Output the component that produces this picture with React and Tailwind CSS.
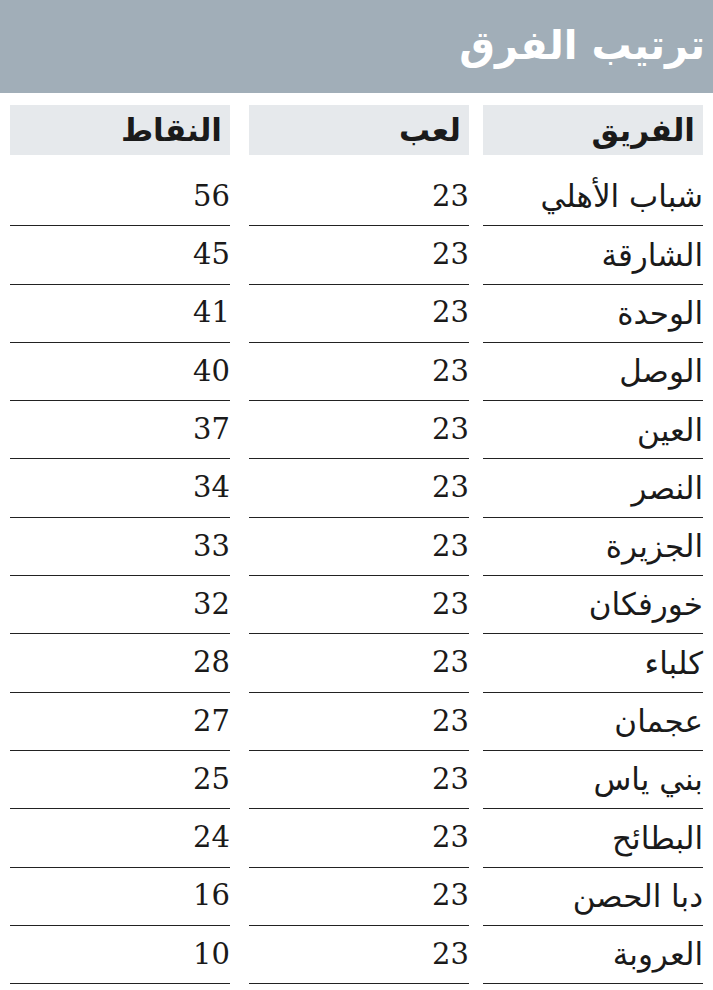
import React from "react";

const rows = [
  ["شباب الأهلي", 23, 56],
  ["الشارقة", 23, 45],
  ["الوحدة", 23, 41],
  ["الوصل", 23, 40],
  ["العين", 23, 37],
  ["النصر", 23, 34],
  ["الجزيرة", 23, 33],
  ["خورفكان", 23, 32],
  ["كلباء", 23, 28],
  ["عجمان", 23, 27],
  ["بني ياس", 23, 25],
  ["البطائح", 23, 24],
  ["دبا الحصن", 23, 16],
  ["العروبة", 23, 10],
];

const headCell =
  "w-[220px] h-[50px] bg-[#e6e9ec] flex items-center pr-2 text-[31px] font-bold font-['DejaVu_Sans',sans-serif]";
const teamCell =
  "w-[220px] h-[58.3px] border-b border-[#222] flex items-center text-[31px] font-['DejaVu_Sans',sans-serif]";
const numCell =
  "w-[220px] h-[58.3px] border-b border-[#222] flex items-center text-[29px] font-['DejaVu_Serif',serif]";

const App = () => {
  return (
    <div dir="rtl" className="w-[713px] h-[990px] bg-white text-[#1a1a1a]">
      <div className="h-[93px] bg-[#a1aeb8] flex items-center px-2">
        <h1 className="text-white text-[40px] font-bold leading-none pb-1 font-['DejaVu_Sans',sans-serif]">
          ترتيب الفرق
        </h1>
      </div>

      <div className="px-[10px] pt-3">
        <div className="flex gap-[14px]">
          <div className={headCell}>الفريق</div>
          <div className={headCell + " ml-[5px]"}>لعب</div>
          <div className={headCell}>النقاط</div>
        </div>

        <div className="pt-[13px]">
          {rows.map(([team, played, pts]) => (
            <div key={team} className="flex gap-[14px]">
              <div className={teamCell}>{team}</div>
              <div className={numCell + " ml-[5px]"}>{played}</div>
              <div className={numCell}>{pts}</div>
            </div>
          ))}
        </div>
      </div>
    </div>
  );
};

export default App;
